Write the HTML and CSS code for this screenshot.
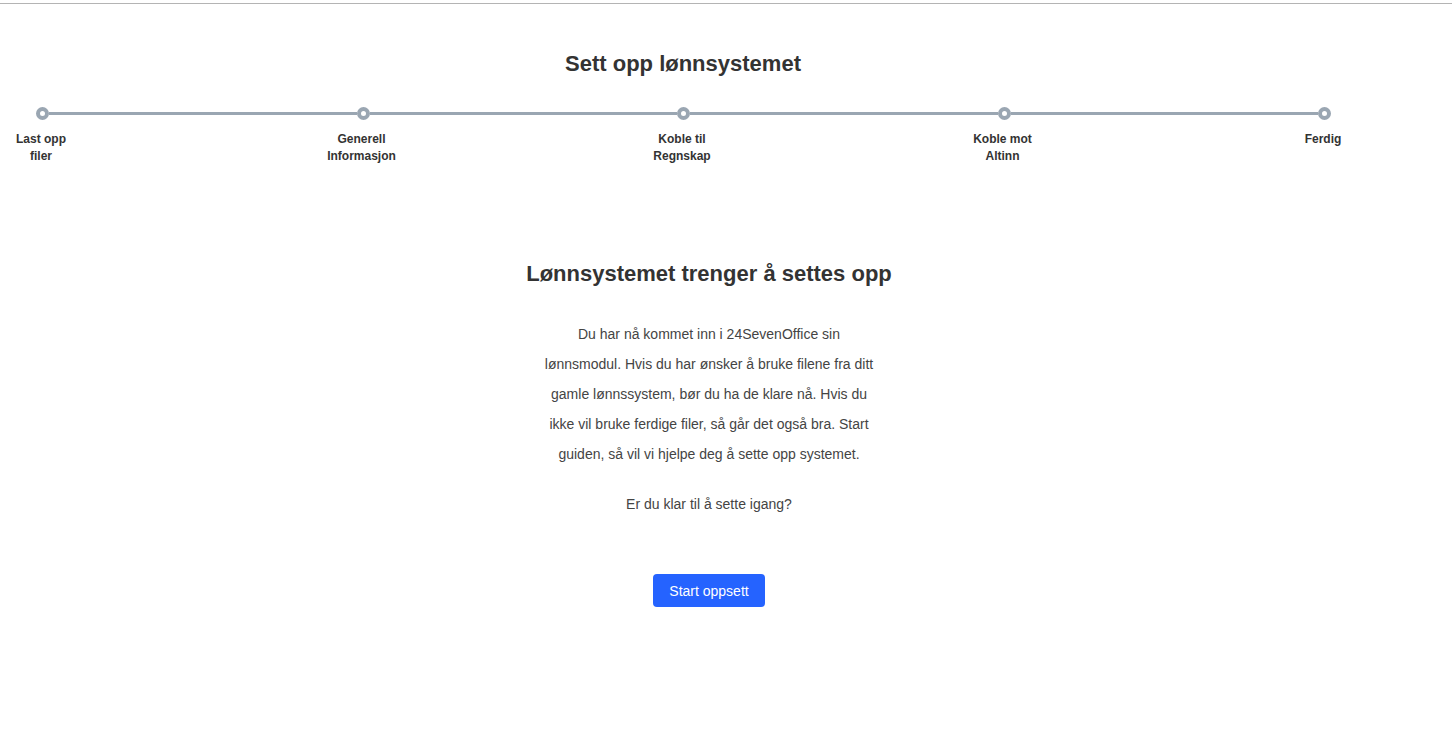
FILE: index.html
```html
<!DOCTYPE html>
<html lang="no">
  <head>
    <meta charset="utf-8" />
    <title>Sett opp lønnsystemet</title>
    <link rel="stylesheet" href="styles.css">
  </head>

  <body>
    <div class="page">
      <div class="wizard">
        <h2 class="wizard-title">Sett opp lønnsystemet</h2>

        <!-- Stepper -->
        <div class="stepper">
          <div class="track">
            <span class="dot"></span>
            <span class="connector"></span>
            <span class="dot"></span>
            <span class="connector"></span>
            <span class="dot"></span>
            <span class="connector"></span>
            <span class="dot"></span>
            <span class="connector"></span>
            <span class="dot"></span>
          </div>
          <div class="labels">
            <div class="step-label">Last opp filer</div>
            <div class="step-label">Generell Informasjon</div>
            <div class="step-label">Koble til Regnskap</div>
            <div class="step-label">Koble mot Altinn</div>
            <div class="step-label">Ferdig</div>
          </div>
        </div>
      </div>

      <div class="intro">
        <h2 class="intro-title">Lønnsystemet trenger å settes opp</h2>
        <p class="intro-text">Du har nå kommet inn i 24SevenOffice sin lønnsmodul. Hvis du har ønsker å bruke filene fra ditt gamle lønnssystem, bør du ha de klare nå. Hvis du ikke vil bruke ferdige filer, så går det også bra. Start guiden, så vil vi hjelpe deg å sette opp systemet.</p>
        <p class="intro-question">Er du klar til å sette igang?</p>
        <button type="button" class="btn-primary">Start oppsett</button>
      </div>
    </div>
  </body>
</html>
```

FILE: styles.css
```css
body {
  margin: 0;
  font-family: "Liberation Sans", Arial, sans-serif;
  color: #333;
  background: #fff;
}
.page {
  margin-top: 3px;
  border-top: 1px solid #b4b4b4;
  width: 1452px;
}
.wizard {
  width: 1366px;
}
.wizard-title {
  margin: 47px 0 0;
  font-size: 22px;
  line-height: 26px;
  font-weight: bold;
  text-align: center;
  color: #333;
}
.stepper {
  margin-top: 30px;
}
.track {
  display: flex;
  align-items: center;
  padding: 0 35px 0 36px;
  height: 13px;
}
.dot {
  flex: 0 0 auto;
  width: 13px;
  height: 13px;
  box-sizing: border-box;
  border: 4px solid #9aa6b2;
  border-radius: 50%;
  background: #fff;
}
.connector {
  flex: 1;
  height: 3px;
  background: #9aa6b2;
}
.labels {
  display: flex;
  justify-content: space-between;
  margin-top: 11px;
}
.step-label {
  width: 70px;
  padding: 0 8px 0 6px;
  font-size: 12px;
  line-height: 17px;
  font-weight: bold;
  text-align: center;
  color: #333;
}
.intro {
  width: 1418px;
  text-align: center;
}
.intro-title {
  margin: 96px 0 0;
  font-size: 22px;
  line-height: 26px;
  font-weight: bold;
  color: #333;
}
.intro-text {
  width: 336px;
  margin: 32px auto 0;
  font-size: 14px;
  line-height: 30px;
  color: #444;
}
.intro-question {
  margin: 20px 0 0;
  font-size: 14px;
  line-height: 30px;
  color: #444;
}
.btn-primary {
  margin-top: 55px;
  height: 33px;
  padding: 0 16px;
  border: none;
  border-radius: 4px;
  background: #2563ff;
  color: #fff;
  font-family: "Liberation Sans", Arial, sans-serif;
  font-size: 14px;
  cursor: pointer;
}
```
